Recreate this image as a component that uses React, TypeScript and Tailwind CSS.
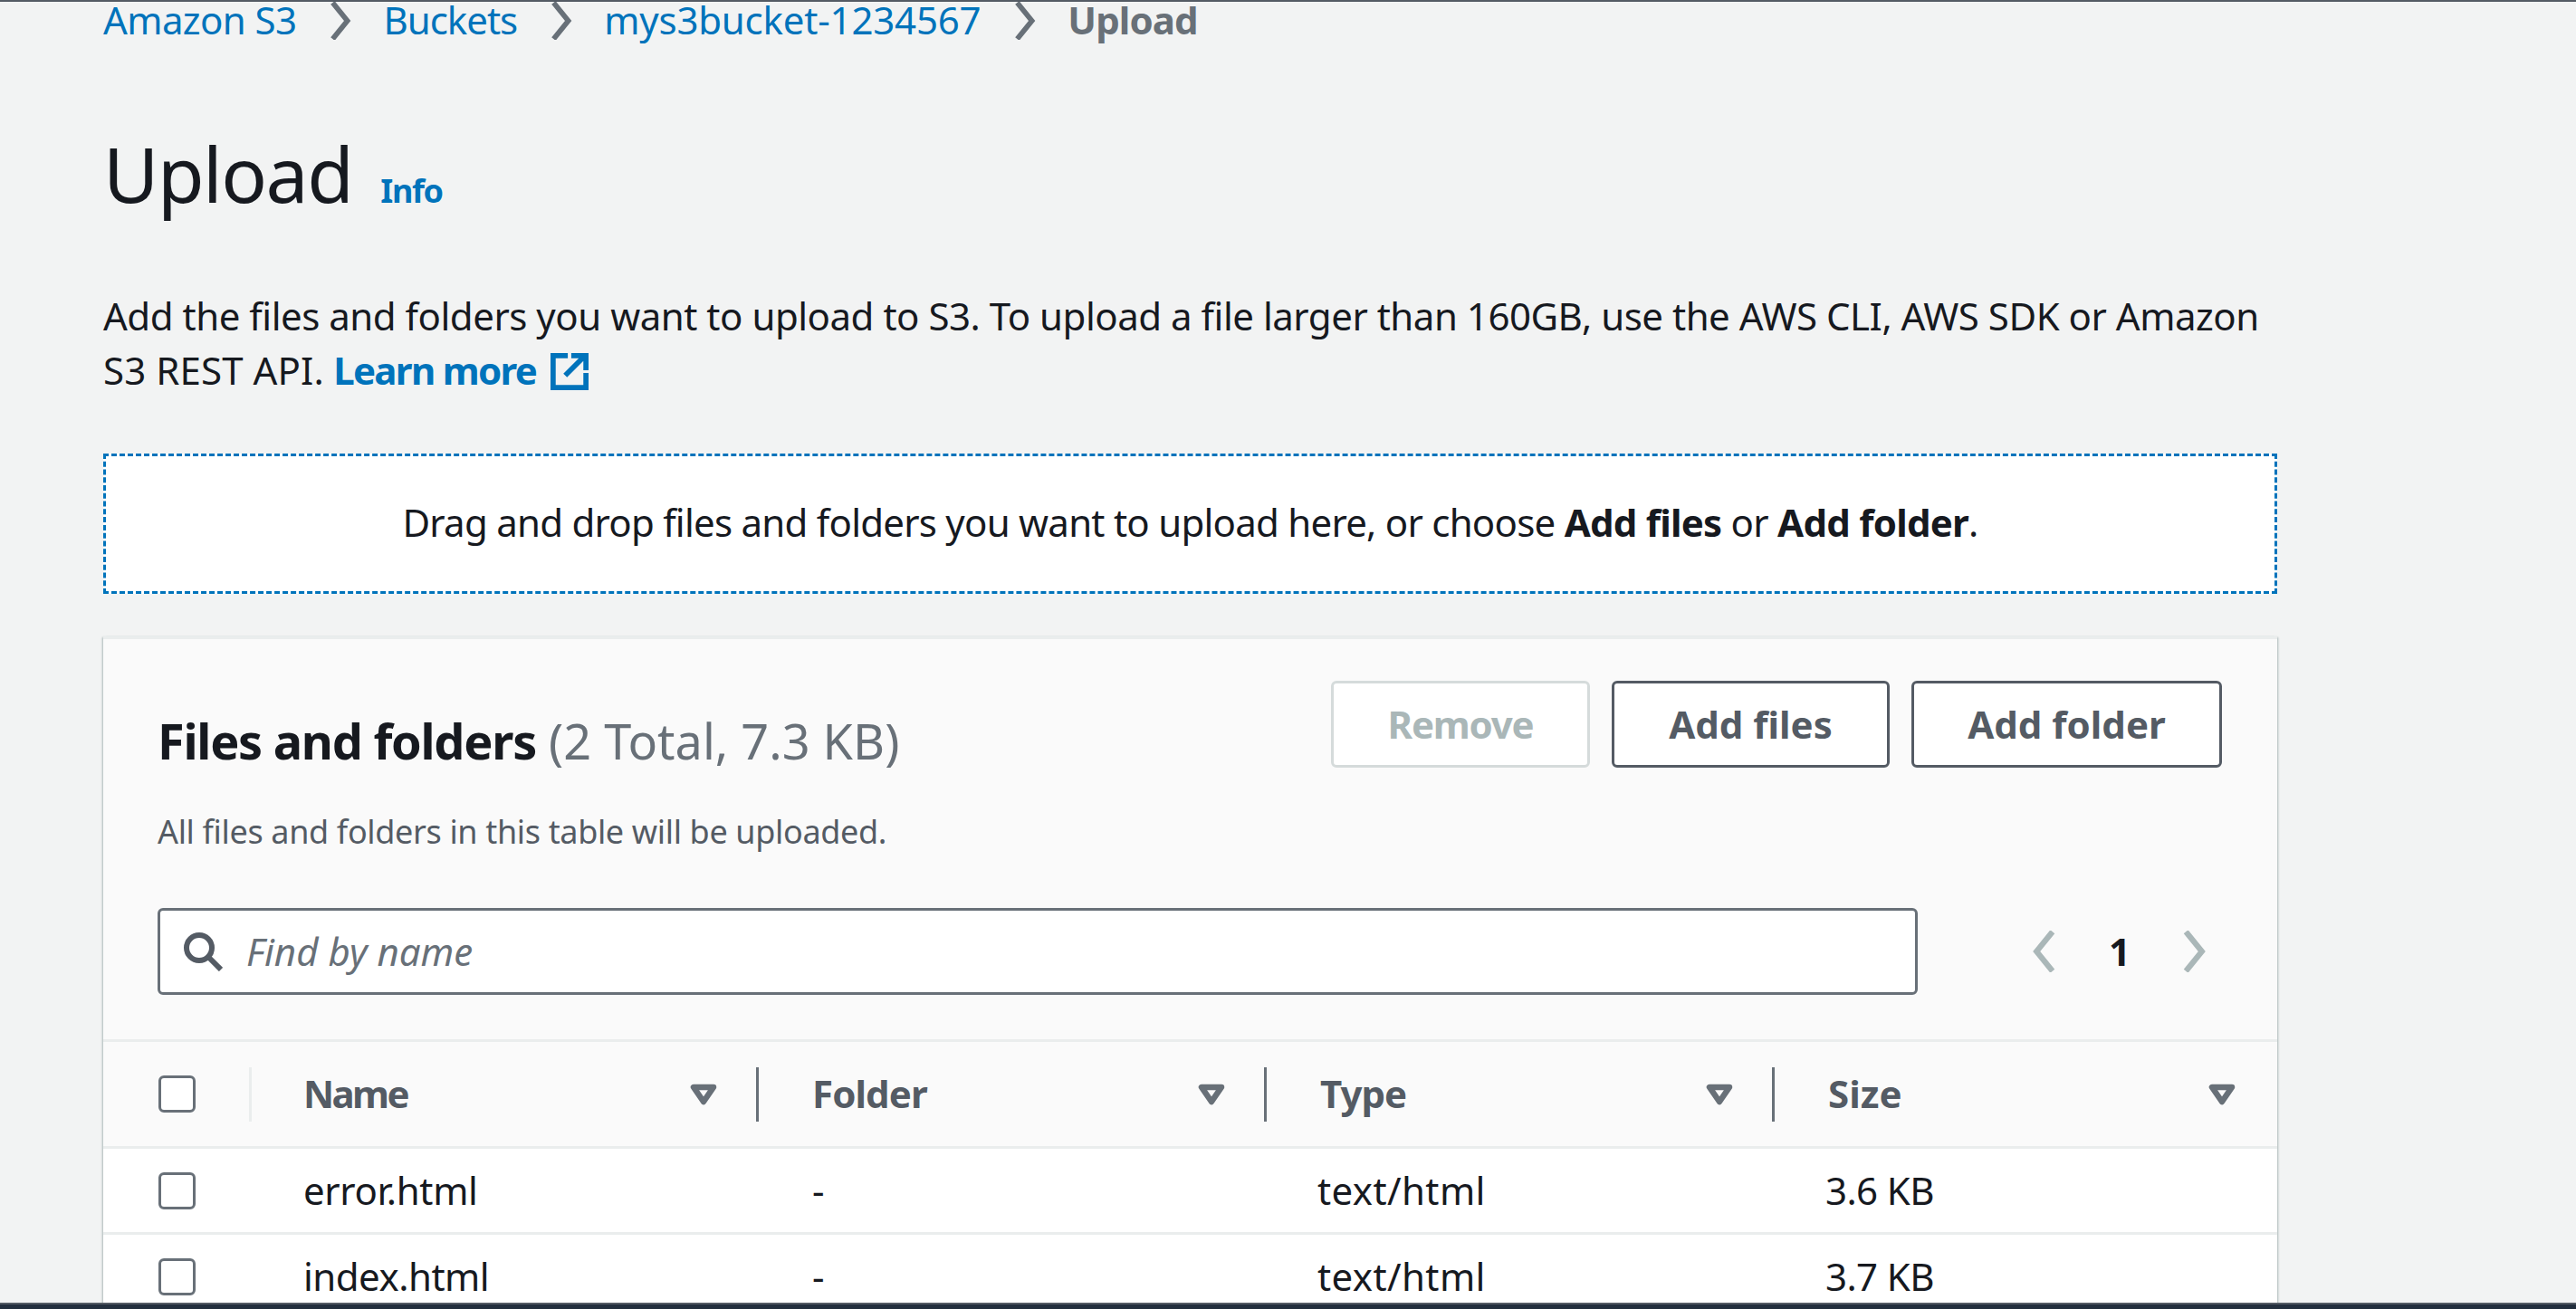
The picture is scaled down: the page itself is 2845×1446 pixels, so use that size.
const columns = [
  { label: 'Name', width: 'w-[560px]', pl: 'pl-[60px]', pr: 'pr-[43px]', tracking: 'tracking-[-2.6px]' },
  { label: 'Folder', width: 'w-[561px]', pl: 'pl-[62px]', pr: 'pr-[43px]', tracking: 'tracking-[-0.9px]' },
  { label: 'Type', width: 'w-[561px]', pl: 'pl-[62px]', pr: 'pr-[43px]', tracking: 'tracking-[-1px]' },
  { label: 'Size', width: 'w-[558px]', pl: 'pl-[62px]', pr: 'pr-[46px]', tracking: 'tracking-normal' },
];

const files = [
  { name: 'error.html', nameTracking: 'tracking-[-0.35px]', folder: '-', type: 'text/html', size: '3.6 KB' },
  { name: 'index.html', nameTracking: 'tracking-[-0.5px]', folder: '-', type: 'text/html', size: '3.7 KB' },
];

function Chevron({ left, className }: { left?: boolean; className: string }) {
  return (
    <svg viewBox="0 0 26 44" className={className} fill="none" stroke="currentColor" strokeWidth="6">
      <path d={left ? 'M22 1 L5 22 L22 43' : 'M4 1 L21 22 L4 43'} />
    </svg>
  );
}

function SortIcon() {
  return (
    <svg viewBox="0 0 30 24" className="h-[24px] w-[30px] shrink-0 text-[#687078]" fill="none" stroke="currentColor" strokeWidth="6.5" strokeLinejoin="round">
      <path d="M4 4 H26 L15 20 Z" />
    </svg>
  );
}

function Checkbox() {
  return <div className="h-[41px] w-[41px] rounded-[6px] border-[3px] border-[#687078] bg-white" />;
}

function ActionButton({ label, className, disabled }: { label: string; className: string; disabled?: boolean }) {
  return (
    <button
      type="button"
      className={`flex h-[96px] items-center justify-center rounded-[6px] border-[3px] bg-white text-[42px] font-bold ${className} ${
        disabled ? 'border-[#d5dbdb] text-[#aab7b8]' : 'border-[#545b64] text-[#545b64]'
      }`}
    >
      {label}
    </button>
  );
}

export default function App() {
  return (
    <div className="flex h-[1446px] w-full flex-col overflow-hidden bg-[#f2f3f3] font-['Noto_Sans',sans-serif] text-[42px] leading-[60px] text-[#16191f] [font-variant-ligatures:common-ligatures]">
      <div className="h-[2px] shrink-0 bg-[#545b64]" />

      <main className="w-[2520px] flex-1 overflow-hidden pl-[114px]">
        {/* Breadcrumbs */}
        <nav className="flex h-[42px] items-start leading-[40px] text-[#0073bb]">
          <span className="tracking-[-0.6px]">Amazon S3</span>
          <Chevron className="mr-[34px] ml-[36px] h-[42px] w-[26px] text-[#687078]" />
          <span className="tracking-[-1px]">Buckets</span>
          <Chevron className="mr-[34px] ml-[36px] h-[42px] w-[26px] text-[#687078]" />
          <span className="tracking-[-0.2px]">mys3bucket-1234567</span>
          <Chevron className="mr-[34px] ml-[36px] h-[42px] w-[26px] text-[#687078]" />
          <span className="font-bold tracking-[-0.9px] text-[#687078]">Upload</span>
        </nav>

        <div className="mt-[88px] flex items-baseline gap-[31px]">
          <h1 className="text-[84px] leading-[120px] font-normal tracking-[-1.5px]">Upload</h1>
          <a className="text-[36px] leading-[48px] font-bold tracking-[-1.4px] text-[#0073bb]">Info</a>
        </div>

        <p className="mt-[67px] w-[2401px] tracking-[-0.48px]">
          Add the files and folders you want to upload to S3. To upload a file larger than 160GB, use the AWS CLI, AWS SDK or Amazon{' '}
          <span className="tracking-[0.1px]">S3 REST API.</span>{' '}
          <a className="font-bold tracking-[-1.7px] text-[#0073bb]">
            Learn more
            <svg viewBox="0 0 44 44" className="ml-[16px] inline-block h-[42px] w-[42px] align-[-6px]" fill="none" stroke="currentColor" strokeWidth="6">
              <path d="M20 4 H3 V41 H41 V24" />
              <path d="M17 27 L39 5 M24 4 H41 V21" />
            </svg>
          </a>
        </p>

        {/* Drop zone */}
        <div className="mt-[62px] flex h-[155px] w-[2401px] items-center justify-center border-[3px] border-dashed border-[#0073bb] bg-white">
          <span className="mb-[3px] tracking-[-0.75px]">
            Drag and drop files and folders you want to upload here, or choose <b>Add files</b> or <b>Add folder</b>.
          </span>
        </div>

        {/* Files table */}
        <section className="mt-[47px] w-[2401px] border-t-[3px] border-[#eaeded] bg-[#fafafa] shadow-[-2px_0_2px_-1px_#aab7b8,2px_0_2px_-1px_#aab7b8]">
          <div className="pt-[46px] pr-[61px] pl-[60px]">
            <div className="flex items-start justify-between">
              <h2 className="mt-[30px] text-[54px] leading-[72px]">
                <b className="font-bold tracking-[-1.25px]">Files and folders</b> <span className="text-[#687078]">(2 Total, 7.3 KB)</span>
              </h2>
              <div className="flex gap-[24px]">
                <ActionButton label="Remove" className="w-[286px] tracking-[-1.2px]" disabled />
                <ActionButton label="Add files" className="w-[307px]" />
                <ActionButton label="Add folder" className="w-[343px]" />
              </div>
            </div>
            <p className="mt-[41px] text-[36px] leading-[48px] tracking-[-0.35px] text-[#545b64]">All files and folders in this table will be uploaded.</p>

            <div className="mt-[60px] flex items-center">
              <div className="flex h-[96px] w-[1944px] items-center rounded-[6px] border-[3px] border-[#687078] bg-white pl-[25px]">
                <svg viewBox="0 0 44 44" className="h-[44px] w-[44px] text-[#545b64]" fill="none" stroke="currentColor" strokeWidth="6">
                  <circle cx="18" cy="18" r="14" />
                  <path d="M28 28 L42 42" />
                </svg>
                <span className="ml-[26px] italic text-[#687078]">Find by name</span>
              </div>
              <div className="ml-[126px] flex items-center text-[#16191f]">
                <Chevron left className="h-[46px] w-[27px] text-[#aab7b8]" />
                <b className="ml-[58px] w-[24px] text-center">1</b>
                <Chevron className="ml-[57px] h-[46px] w-[27px] text-[#aab7b8]" />
              </div>
            </div>
          </div>

          <div className="mt-[49px] flex h-[121px] items-center border-y-[3px] border-[#eaeded]">
            <div className="flex w-[161px] items-center pl-[61px]">
              <Checkbox />
            </div>
            {columns.map((col, i) => (
              <div key={col.label} className={`relative flex h-[60px] items-center ${col.pl} ${col.pr} ${col.width}`}>
                <div className={`absolute top-0 bottom-0 left-0 w-[3px] ${i === 0 ? 'bg-[#eaeded]' : 'bg-[#687078]'}`} />
                <span className={`mb-[2px] flex-1 font-bold text-[#545b64] ${col.tracking}`}>{col.label}</span>
                <SortIcon />
              </div>
            ))}
          </div>

          {files.map((file) => (
            <div key={file.name} className="flex h-[95px] items-center border-b-[3px] border-[#eaeded] bg-white">
              <div className="flex w-[161px] items-center pl-[61px]">
                <Checkbox />
              </div>
              <div className={`w-[560px] pl-[60px] ${file.nameTracking}`}>{file.name}</div>
              <div className="w-[561px] pl-[62px]">{file.folder}</div>
              <div className="w-[561px] pl-[59px] tracking-[0.4px]">{file.type}</div>
              <div className="w-[558px] pl-[59px] tracking-[-0.6px]">{file.size}</div>
            </div>
          ))}
        </section>
      </main>

      <div className="h-[7px] shrink-0 border-t-[2px] border-[#545b64] bg-[#232f3e]" />
    </div>
  );
}
